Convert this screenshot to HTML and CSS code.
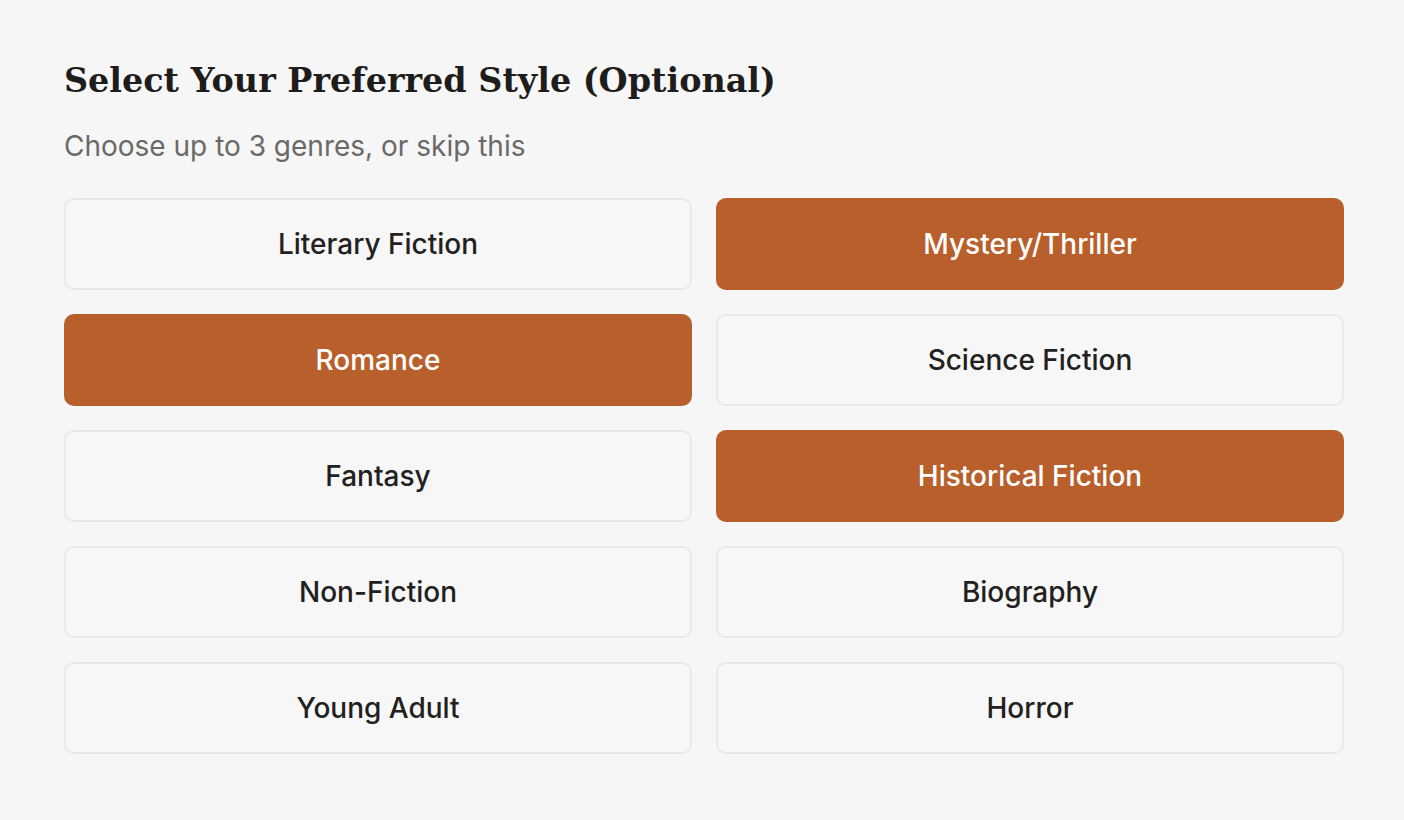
FILE: index.html
```html
<!DOCTYPE html>
<html>
<head>
<meta charset="utf-8">
<link rel="stylesheet" href="styles.css">
</head>
<body>
<div class="page">
  <h1 class="title">Select Your Preferred Style (Optional)</h1>
  <p class="subtitle">Choose up to 3 genres, or skip this</p>
  <div class="grid">
    <button class="genre">Literary Fiction</button>
    <button class="genre selected">Mystery/Thriller</button>
    <button class="genre selected">Romance</button>
    <button class="genre">Science Fiction</button>
    <button class="genre">Fantasy</button>
    <button class="genre selected">Historical Fiction</button>
    <button class="genre">Non-Fiction</button>
    <button class="genre">Biography</button>
    <button class="genre">Young Adult</button>
    <button class="genre">Horror</button>
  </div>
</div>
</body>
</html>
```
FILE: styles.css
```css
html, body {
  margin: 0;
  padding: 0;
  background: #f6f6f6;
}
.page {
  width: 1280px;
  padding: 56px 0 0 64px;
  font-family: Inter, "Noto Sans", sans-serif;
}
.title {
  margin: 0;
  font-family: "DejaVu Serif", "Liberation Serif", serif;
  font-weight: 700;
  font-size: 33.4px;
  line-height: 50px;
  color: #1f1d1b;
  letter-spacing: 0;
}
.subtitle {
  margin: 20px 0 0 0;
  font-size: 28px;
  line-height: 40px;
  color: #6b6967;
}
.grid {
  margin-top: 32px;
  display: grid;
  grid-template-columns: 1fr 1fr;
  column-gap: 24px;
  row-gap: 24px;
}
.genre {
  height: 92px;
  box-sizing: border-box;
  border: 2px solid #e9e9e9;
  border-radius: 10px;
  background: #f7f7f7;
  font-family: Inter, "Noto Sans", sans-serif;
  font-size: 28px;
  font-weight: 500;
  color: #222120;
  cursor: pointer;
  padding: 0;
}
.genre.selected {
  background: #b95f2b;
  border-color: #b95f2b;
  color: #ffffff;
}
```
